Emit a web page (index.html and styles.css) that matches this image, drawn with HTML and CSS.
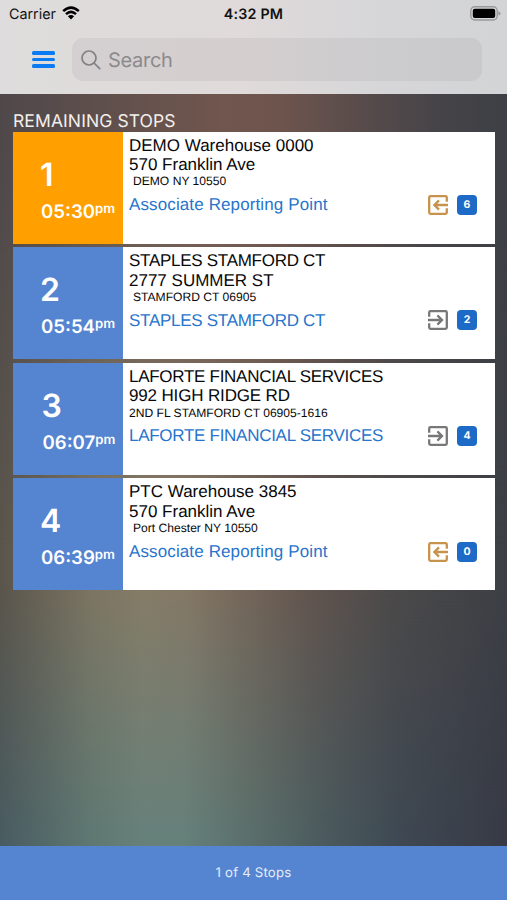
FILE: index.html
```html
<!DOCTYPE html>
<html lang="en">
<head>
<meta charset="utf-8">
<title>Remaining Stops</title>
<link rel="stylesheet" href="styles.css">
</head>
<body>
<svg class="symbols" aria-hidden="true">
  <symbol id="inbound" viewBox="0 0 20 20">
    <path d="M18.8 6.8V2.5Q18.8 1.2 17.5 1.2H2.5Q1.2 1.2 1.2 2.5V17.5Q1.2 18.8 2.5 18.8H17.5Q18.8 18.8 18.8 17.5V13.2M20 10H7.5M11 5.4L6.4 10L11 14.6"/>
  </symbol>
  <symbol id="outbound" viewBox="0 0 20 20">
    <path d="M1.2 6.8V2.5Q1.2 1.2 2.5 1.2H17.5Q18.8 1.2 18.8 2.5V17.5Q18.8 18.8 17.5 18.8H2.5Q1.2 18.8 1.2 17.5V13.2M0 10H13M9.4 5.4L14 10L9.4 14.6"/>
  </symbol>
</svg>
<div class="app">
  <header class="top">
    <div class="status">
      <div class="carrier"><span>Carrier</span>
        <svg class="wifi" viewBox="0 0 18 14"><path d="M1.2 5.2Q9 -2 16.8 5.2M4 8.2Q9 3.6 14 8.2"/><path class="dot" d="M9 13.4L5.9 10.2Q9 7.6 12.1 10.2Z"/></svg>
      </div>
      <div class="clock">4:32 PM</div>
      <svg class="battery" viewBox="0 0 31 15"><rect class="shell" x=".8" y=".8" width="26.4" height="13.2" rx="4"/><rect x="2.8" y="2.8" width="22.4" height="9.2" rx="2"/><path class="cap" d="M28.4 5.2Q30.6 6 30.6 7.4Q30.6 8.8 28.4 9.6Z"/></svg>
    </div>
    <div class="nav">
      <div class="menu"><i></i><i></i><i></i></div>
      <div class="search">
        <svg class="lens" viewBox="0 0 20 20"><circle cx="8" cy="8" r="7"/><path d="M13 13L18.7 18.7"/></svg>
        <span>Search</span>
      </div>
    </div>
  </header>
  <main class="stops">
    <h1>REMAINING STOPS</h1>
    <article class="stop current">
      <div class="when"><b>1</b><time>05:30<sup>pm</sup></time></div>
      <div class="info">
        <p>DEMO Warehouse 0000</p><p>570 Franklin Ave</p><p class="city indent">DEMO NY 10550</p>
        <div class="contact"><a>Associate Reporting Point</a><svg class="dir in"><use href="#inbound"/></svg><span class="count">6</span></div>
      </div>
    </article>
    <article class="stop">
      <div class="when"><b>2</b><time>05:54<sup>pm</sup></time></div>
      <div class="info">
        <p class="caps">STAPLES STAMFORD CT</p><p>2777 SUMMER ST</p><p class="city indent">STAMFORD CT 06905</p>
        <div class="contact"><a class="caps">STAPLES STAMFORD CT</a><svg class="dir"><use href="#outbound"/></svg><span class="count">2</span></div>
      </div>
    </article>
    <article class="stop">
      <div class="when shifted"><b>3</b><time>06:07<sup>pm</sup></time></div>
      <div class="info">
        <p class="caps">LAFORTE FINANCIAL SERVICES</p><p class="road">992 HIGH RIDGE RD</p><p class="city">2ND FL STAMFORD CT 06905-1616</p>
        <div class="contact"><a class="caps">LAFORTE FINANCIAL SERVICES</a><svg class="dir"><use href="#outbound"/></svg><span class="count">4</span></div>
      </div>
    </article>
    <article class="stop">
      <div class="when"><b>4</b><time>06:39<sup>pm</sup></time></div>
      <div class="info">
        <p>PTC Warehouse 3845</p><p>570 Franklin Ave</p><p class="city indent">Port Chester NY 10550</p>
        <div class="contact"><a>Associate Reporting Point</a><svg class="dir in"><use href="#inbound"/></svg><span class="count">0</span></div>
      </div>
    </article>
  </main>
  <footer>1 of 4 Stops</footer>
</div>
</body>
</html>
```
FILE: styles.css
```css
* { box-sizing: border-box; }
body { margin: 0; font-family: Inter, sans-serif; text-rendering: geometricPrecision; }
.symbols { position: absolute; width: 0; height: 0; }
.app { height: 900px; display: flex; flex-direction: column; overflow: hidden; }
svg { flex: none; }

.top { height: 94px; background: linear-gradient(90deg, #dedcdc, #e0dada 48%, #d6d6d8 75%, #d3d4d6); }
.status { height: 27px; display: grid; grid-template-columns: 1fr auto 1fr; align-items: center; padding: 0 6px 0 9px; color: #111; }
.carrier { display: flex; align-items: center; gap: 6px; font-size: 14.3px; padding-top: 1px; }
.wifi { width: 18px; height: 14px; margin-top: -2px; fill: none; stroke: #000; stroke-width: 2.5; }
.wifi .dot { fill: #000; stroke: none; }
.clock { font-size: 14.3px; font-weight: 600; letter-spacing: .2px; padding: 1px 3px 0 0; }
.battery { width: 31px; height: 15px; justify-self: end; }
.battery .shell { fill: none; stroke: #999; stroke-width: 1.4; }
.battery .cap { fill: #999; }
.nav { display: flex; align-items: center; padding: 11px 25px 0 32px; gap: 17px; }
.menu { width: 23px; display: flex; flex-direction: column; gap: 3.3px; }
.menu i { height: 3.3px; border-radius: 1.5px; background: #0a7bf2; }
.search { flex: 1; height: 43px; border-radius: 11px; background: rgba(118, 110, 115, .1); display: flex; align-items: center; padding-left: 9px; gap: 7px; color: #8c8a8c; font-size: 20px; letter-spacing: -.3px; }
.lens { width: 20px; height: 20px; fill: none; stroke: #828083; stroke-width: 1.7; stroke-linecap: round; }

/* Warm-to-teal wash built from three horizontal gradients that fade vertically. */
.stops { position: relative; isolation: isolate; flex: 1; padding: 17px 12px 0 13px; background: linear-gradient(90deg, #5a554c, #7c7562 18%, #857c67 28%, #847866 37%, #75675a 48%, #62554f 61%, #4c4a4a 77%, #3c3f45); }
.stops::before, .stops::after { content: ""; position: absolute; inset: 0; z-index: -1; }
.stops::before { background: linear-gradient(90deg, #4f484a, #67524d 30%, #70564d 44%, #6d544d 56%, #574b4b 72%, #444348 88%, #3e4046); -webkit-mask-image: linear-gradient(#000 5%, transparent 60%); mask-image: linear-gradient(#000 5%, transparent 60%); }
.stops::after { background: linear-gradient(90deg, #495b60, #5f7872 18%, #67807a 28%, #66807a 36%, #5b6f6b 49%, #4b5a5d 64%, #3f4953 78%, #373a45); -webkit-mask-image: linear-gradient(transparent 66%, #000 98%); mask-image: linear-gradient(transparent 66%, #000 98%); }
h1 { margin: 0; height: 20.6px; font: 400 17.5px/21px Inter, sans-serif; letter-spacing: .1px; color: #f3efed; }
.stop { height: 112.1px; margin-bottom: 3.5px; display: flex; background: #fff; }
.when { width: 110px; padding: 26px 0 0 28px; background: #5584d1; color: #fff; }
.when.shifted { padding-left: 29.5px; }
.current .when { background: #ffa000; }
.when b { display: block; font-size: 32px; line-height: 34px; font-weight: 600; margin-left: -1px; }
time { display: block; margin-top: 9px; font-size: 18.6px; line-height: 22px; font-weight: 600; white-space: nowrap; }
sup { font-size: 13.2px; line-height: 0; vertical-align: 5.5px; }
.info { flex: 1; padding: 4px 18px 0 6px; font-family: "Liberation Sans", Arial, sans-serif; font-size: 17px; line-height: 19.4px; color: #080808; }
p { margin: 0; white-space: nowrap; }
.caps { letter-spacing: -.28px; }
.road { letter-spacing: -.15px; }
.city { font-size: 12.1px; line-height: 15px; }
.indent { padding-left: 4px; }
.contact { display: flex; align-items: center; height: 20px; margin-top: 5.4px; }
a { flex: 1; color: #2774cc; white-space: nowrap; letter-spacing: .12px; }
.contact .caps { letter-spacing: -.28px; }
.dir { width: 20px; height: 20px; margin-right: 9px; fill: none; stroke: #777; stroke-width: 2.3; }
.dir.in { stroke: #c6924c; }
.count { width: 20px; height: 20px; border-radius: 4px; background: #1d6ac7; color: #fff; font: 700 10.5px/20px Inter, sans-serif; text-align: center; }
footer { height: 54px; background: #5584d1; color: #e5edfa; text-align: center; font-size: 13.2px; line-height: 55px; letter-spacing: .2px; }
```
